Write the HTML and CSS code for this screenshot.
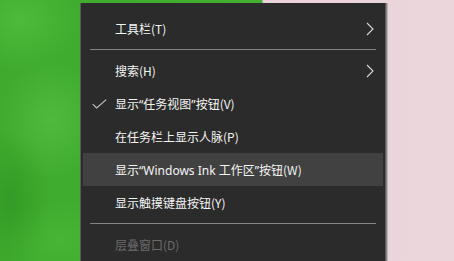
FILE: index.html
```html
<!DOCTYPE html>
<html lang="zh-CN">
<head>
<meta charset="utf-8">
<title>任务栏菜单</title>
<link rel="stylesheet" href="styles.css">
</head>
<body>
<div class="desk">
  <div class="menu">
    <div class="item">
      <span class="mark"></span>
      <span class="label">工具栏(T)</span>
      <svg class="arrow" width="8" height="14" viewBox="0 0 8 14"><path d="M1 1 L7 7 L1 13" fill="none" stroke="#d8d8d8" stroke-width="1.1"/></svg>
    </div>
    <div class="sep"></div>
    <div class="item">
      <span class="mark"></span>
      <span class="label">搜索(H)</span>
      <svg class="arrow" width="8" height="14" viewBox="0 0 8 14"><path d="M1 1 L7 7 L1 13" fill="none" stroke="#d8d8d8" stroke-width="1.1"/></svg>
    </div>
    <div class="item">
      <span class="mark"><svg width="15" height="10" viewBox="0 0 15 10"><path d="M0.8 5.2 L4.6 9 L14.2 0.6" fill="none" stroke="#c4c4c4" stroke-width="1.1"/></svg></span>
      <span class="label">显示<span class="q">“</span>任务视图<span class="q">”</span>按钮(V)</span>
    </div>
    <div class="item">
      <span class="mark"></span>
      <span class="label">在任务栏上显示人脉(P)</span>
    </div>
    <div class="item hover">
      <span class="mark"></span>
      <span class="label">显示<span class="q">“</span><span class="latin">Windows Ink </span>工作区<span class="q">”</span>按钮(W)</span>
    </div>
    <div class="item">
      <span class="mark"></span>
      <span class="label">显示触摸键盘按钮(Y)</span>
    </div>
    <div class="sep"></div>
    <div class="item disabled">
      <span class="mark"></span>
      <span class="label">层叠窗口(D)</span>
    </div>
  </div>
</div>
</body>
</html>
```
FILE: styles.css
```css
html, body {
  margin: 0;
  padding: 0;
  width: 454px;
  height: 261px;
  overflow: hidden;
}
body {
  background:
    radial-gradient(ellipse 60px 50px at 20px 20px, rgba(90, 200, 70, 0.55), rgba(90, 200, 70, 0) 100%),
    radial-gradient(ellipse 50px 60px at 50px 120px, rgba(95, 200, 75, 0.5), rgba(95, 200, 75, 0) 100%),
    radial-gradient(ellipse 40px 70px at 10px 200px, rgba(40, 140, 30, 0.5), rgba(40, 140, 30, 0) 100%),
    radial-gradient(ellipse 60px 40px at 60px 240px, rgba(80, 190, 60, 0.5), rgba(80, 190, 60, 0) 100%),
    linear-gradient(to right, #3faa2e 0, #43b032 262px, #ead4d9 263px, #ebd6db 454px);
  font-family: "Noto Sans CJK SC", "Noto Sans", sans-serif;
}
.desk {
  padding: 3px 0 0 80px;
  height: 258px;
}
.menu {
  width: 305px;
  height: 258px;
  box-sizing: border-box;
  background: #2b2b2b;
  padding-top: 9px;
  border-left: 1px solid #5a5a5a;
  box-shadow: 1px 0 0 #5c5c5c, 2px 0 0 #8a8486, 3px 0 0 #b8afb2;
  display: flex;
  flex-direction: column;
}
.item {
  height: 33px;
  flex: none;
  display: flex;
  align-items: center;
  margin: 0 2px 0 2px;
  padding-right: 9px;
  color: #f4f4f4;
  font-size: 12px;
  white-space: nowrap;
}
.item.hover {
  background: #414141;
}
.item.disabled {
  color: #6a6a6a;
}
.mark {
  width: 32px;
  flex: none;
  display: flex;
  align-items: center;
  padding-left: 9px;
  box-sizing: border-box;
}
.label {
  flex: none;
}
.q {
  font-family: "Noto Sans", sans-serif;
}
.latin {
  font-family: "Noto Sans", sans-serif;
  white-space: pre;
}
.arrow {
  margin-left: auto;
}
.sep {
  height: 9px;
  flex: none;
  display: flex;
  align-items: center;
  margin: 0 9px 0 9px;
}
.sep::before {
  content: "";
  display: block;
  flex: 1;
  height: 1px;
  background: #848484;
}
```
